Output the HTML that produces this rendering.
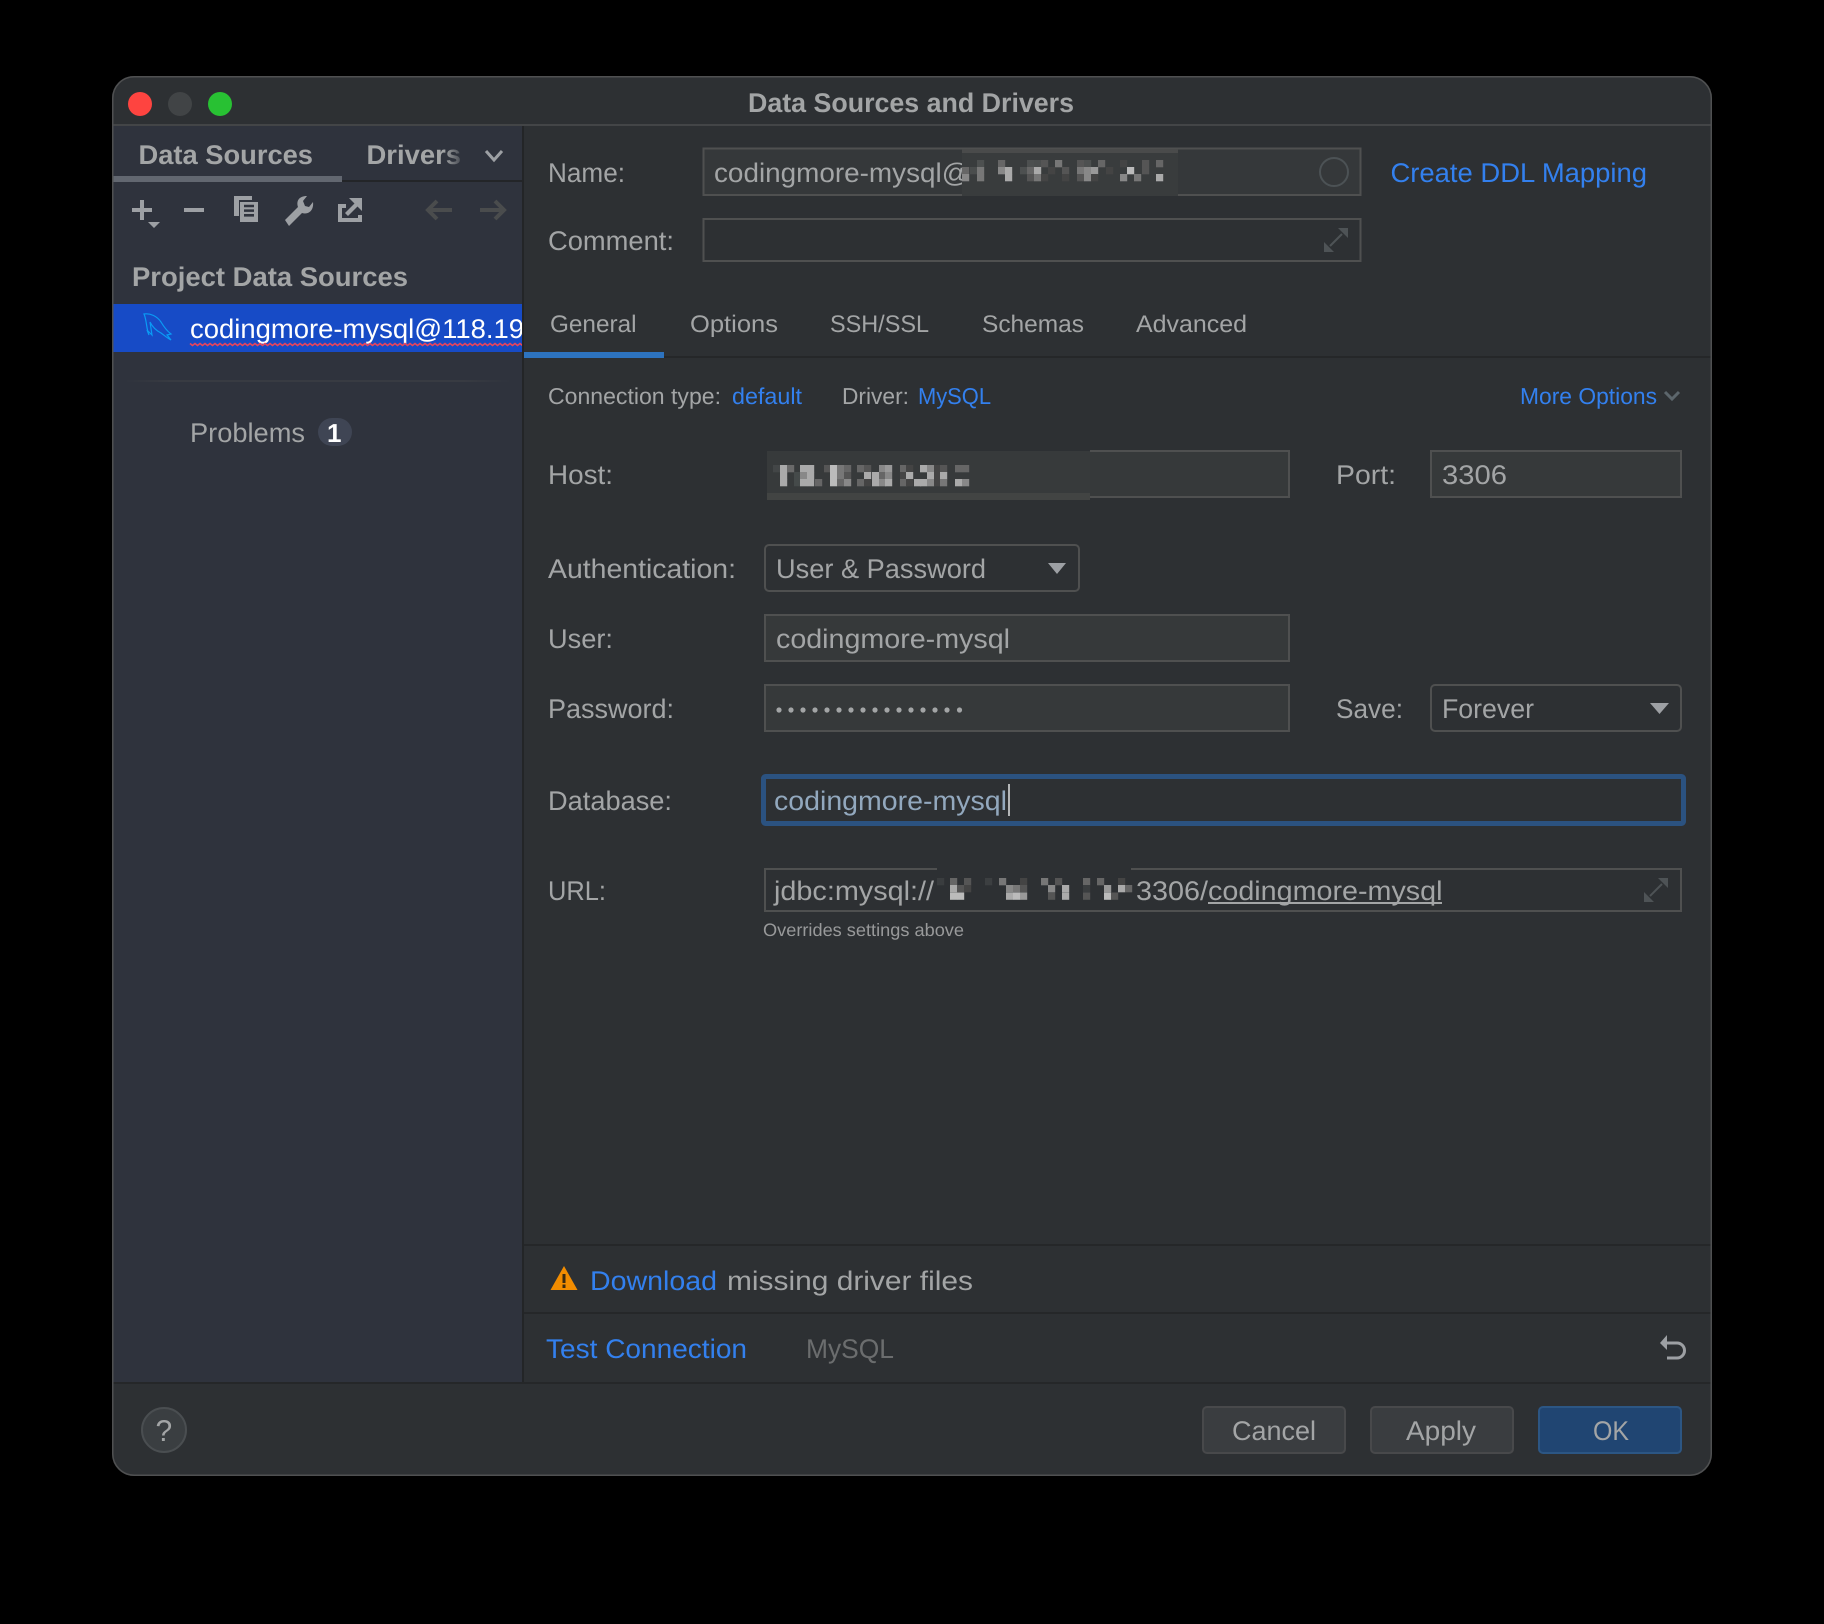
<!DOCTYPE html>
<html lang="en"><head><meta charset="utf-8"><title>Data Sources and Drivers</title>
<style>
html,body{margin:0;padding:0;background:#000;width:1824px;height:1624px;overflow:hidden}
svg{display:block}
text{font-family:"Liberation Sans",sans-serif;font-size:27px;fill:#a3a5a6;text-rendering:geometricPrecision}
.b{font-weight:700}.l{fill:#3380ee}.s{font-size:24px}.c{font-size:23px}
.p rect{width:7.2px;height:7.3px}
.i{fill:#9da0a4}.st{fill:none;stroke:#9da0a4;stroke-width:4}
</style></head><body>
<svg width="1824" height="1624" viewBox="0 0 1824 1624" xmlns="http://www.w3.org/2000/svg">
<defs>
<linearGradient id="fade" x1="0" x2="1" y1="0" y2="0"><stop offset="0" stop-color="#2f333d" stop-opacity="0"/><stop offset="1" stop-color="#2f333d" stop-opacity=".85"/></linearGradient>
<linearGradient id="sepg" x1="0" x2="1" y1="0" y2="0"><stop offset="0" stop-color="#383b42" stop-opacity="0"/><stop offset=".12" stop-color="#383b42"/><stop offset=".88" stop-color="#383b42"/><stop offset="1" stop-color="#383b42" stop-opacity="0"/></linearGradient>
<clipPath id="win"><rect x="112" y="76" width="1600" height="1400" rx="22"/></clipPath>
</defs>
<rect width="1824" height="1624" fill="#000"/>
<g clip-path="url(#win)">
<rect x="112" y="76" width="1600" height="1400" fill="#2d3033"/>
<rect x="112" y="126" width="411" height="1257" fill="#2f333d"/>
<rect x="112" y="124" width="1600" height="2" fill="#434547"/>
</g>
<circle cx="140" cy="104" r="12" fill="#fe4440"/><circle cx="180" cy="104" r="12" fill="#414446"/><circle cx="220" cy="104" r="12" fill="#28c133"/>
<text class="b" x="748" y="112" textLength="326" lengthAdjust="spacingAndGlyphs">Data Sources and Drivers</text>
<text class="b" x="138.500" y="164" textLength="174.500" lengthAdjust="spacingAndGlyphs">Data Sources</text>
<text class="b" x="366.500" y="164" textLength="94.500" lengthAdjust="spacingAndGlyphs">Drivers</text>
<rect x="444" y="140" width="19" height="30" fill="url(#fade)"/>
<path d="M486 151l8 9 8-9" fill="none" stroke="#9da0a4" stroke-width="3"/>
<rect x="342" y="180" width="180" height="2" fill="#232528"/>
<rect x="112" y="176" width="230" height="6" fill="#626770"/>
<path class="i" d="M140 200h4v8h8v4h-8v8h-4v-8h-8v-4h8zM148 222h12l-6 6zM184 208h20v4h-20z"/>
<path class="i" d="M234 196h18v4h-13v16h-5z"/>
<path class="i" fill-rule="evenodd" d="M240 202h18v20h-18zM244 204.800v2.500h10v-2.500zM244 209.400v2.500h10v-2.500zM244 214v2.600h10v-2.600z"/>
<path class="i" d="M285 220l13-13c-2-6 1-11 9-11l-4 5 2 5 4 1 4-5c1 8-4 13-11 11l-13 13z"/>
<path class="i" d="M338 204h8v4h-4v10h16v-3h4v7h-24z"/>
<path class="i" d="M349 198h13v13l-4.500-4.500-9.500 9.500-3-3 9.500-9.500z"/>
<path d="M452 210h-23M437 201l-9 9 9 9M480 210h23M495 201l9 9-9 9" fill="none" stroke="#4a4c4d" stroke-width="4"/>
<text class="b" x="132" y="286" textLength="276" lengthAdjust="spacingAndGlyphs">Project Data Sources</text>
<rect x="112" y="304" width="411" height="48" fill="#174bc6"/>
<path d="M144 314C150 313 157 316 161 322C164 327 167 331 171 334L167 335L171 340C167 338 164 335 161 333C155 330 152 326 150 322L152 335L147 330L149 335C146 328 147 321 144 314Z" fill="none" stroke="#0a9bf5" stroke-width="1.200"/>
<text x="190" y="338" textLength="334" lengthAdjust="spacingAndGlyphs" style="fill:#fff">codingmore-mysql@118.19</text>
<g fill="none" stroke="#e8445a" stroke-width="1.600">
<path id="w" d="M190 343.500l2.500 2 2.500-2 2.500 2 2.500-2 2.500 2 2.500-2 2.500 2 2.500-2 2.500 2 2.500-2 2.500 2 2.500-2 2.500 2 2.500-2 2.500 2 2.500-2 2.500 2 2.500-2 2.500 2 2.500-2 2.500 2 2.500-2 2.500 2 2.500-2 2.500 2 2.500-2 2.500 2 2.500-2 2.500 2 2.500-2 2.500 2 2.500-2 2.500 2 2.500-2 2.500 2 2.500-2 2.500 2 2.500-2 2.500 2 2.500-2 2.500 2 2.500-2 2.500 2 2.500-2 2.500 2 2.500-2 2.500 2 2.500-2 2.500 2 2.500-2 2.500 2 2.500-2 2.500 2 2.500-2 2.500 2 2.500-2 2.500 2 2.500-2 2.500 2 2.500-2 2.500 2 2.500-2 2.500 2 2.500-2 2.500 2 2.500-2 2.500 2 2.500-2 2.500 2 2.500-2"/>
<path transform="translate(165 0)" d="M190 343.500l2.500 2 2.500-2 2.500 2 2.500-2 2.500 2 2.500-2 2.500 2 2.500-2 2.500 2 2.500-2 2.500 2 2.500-2 2.500 2 2.500-2 2.500 2 2.500-2 2.500 2 2.500-2 2.500 2 2.500-2 2.500 2 2.500-2 2.500 2 2.500-2 2.500 2 2.500-2 2.500 2 2.500-2 2.500 2 2.500-2 2.500 2 2.500-2 2.500 2 2.500-2 2.500 2 2.500-2 2.500 2 2.500-2 2.500 2 2.500-2 2.500 2 2.500-2 2.500 2 2.500-2 2.500 2 2.500-2 2.500 2 2.500-2 2.500 2 2.500-2 2.500 2 2.500-2 2.500 2 2.500-2 2.500 2 2.500-2 2.500 2 2.500-2 2.500 2 2.500-2 2.500 2 2.500-2 2.500 2 2.500-2 2.500 2 2.500-2 2.500 2 2.500-2"/>
</g>
<rect x="125" y="380" width="385" height="2" fill="url(#sepg)"/>
<text x="190" y="442" textLength="115" lengthAdjust="spacingAndGlyphs">Problems</text>
<rect x="318" y="418" width="34" height="28" rx="14" fill="#3f4554"/>
<text class="b" x="327" y="442" style="fill:#fff;font-size:26px">1</text>
<rect x="523" y="126" width="1188" height="1257" fill="#2d3033"/>
<rect x="522" y="126" width="2" height="1257" fill="#232527"/>
<text x="548" y="182" textLength="77" lengthAdjust="spacingAndGlyphs">Name:</text>
<rect x="703.500" y="148.500" width="657" height="46.500" fill="#35383a" stroke="#4f5050" stroke-width="2"/>
<text x="714" y="182" textLength="256" lengthAdjust="spacingAndGlyphs">codingmore-mysql@</text>
<rect x="962" y="149" width="216" height="47" fill="#393c3d"/>
<rect x="962" y="149" width="216" height="4" fill="#4a4b4b"/>
<g class="p" transform="translate(0,160)"><rect x="977" fill="#4d5050"/><rect x="998" fill="#666"/><rect x="1027" fill="#4d5050"/><rect x="1034" fill="#4b4e4e"/><rect x="1041" fill="#555"/><rect x="1055" fill="#777"/><rect x="1077" fill="#555"/><rect x="1084" fill="#4d5050"/><rect x="1098" fill="#666"/><rect x="1120" fill="#444"/><rect x="1142" fill="#555"/><rect x="1156" fill="#666"/></g>
<g class="p" transform="translate(0,167)"><rect x="962" fill="#666"/><rect x="970" fill="#4a4d4d"/><rect x="977" fill="#777"/><rect x="998" fill="#888"/><rect x="1005" fill="#aaa"/><rect x="1020" fill="#4d5050"/><rect x="1027" fill="#666"/><rect x="1034" fill="#aaa"/><rect x="1048" fill="#444"/><rect x="1062" fill="#555"/><rect x="1077" fill="#777"/><rect x="1084" fill="#888"/><rect x="1091" fill="#999"/><rect x="1106" fill="#444"/><rect x="1127" fill="#bbb"/><rect x="1142" fill="#555"/></g>
<g class="p" transform="translate(0,174)"><rect x="962" fill="#888"/><rect x="977" fill="#777"/><rect x="1005" fill="#aaa"/><rect x="1027" fill="#555"/><rect x="1034" fill="#777"/><rect x="1041" fill="#444"/><rect x="1062" fill="#444"/><rect x="1077" fill="#555"/><rect x="1084" fill="#888"/><rect x="1091" fill="#444"/><rect x="1120" fill="#888"/><rect x="1134" fill="#777"/><rect x="1156" fill="#aaa"/></g>
<circle cx="1334" cy="172" r="14" fill="none" stroke="#4c5255" stroke-width="2"/>
<text class="l" x="1390.500" y="182" textLength="256.500" lengthAdjust="spacingAndGlyphs">Create DDL Mapping</text>
<text x="548" y="250" textLength="126" lengthAdjust="spacingAndGlyphs">Comment:</text>
<rect x="703.500" y="219" width="657" height="42" fill="#2d3033" stroke="#4f5050" stroke-width="2"/>
<path d="M1348 228v10l-10-10zM1324 252v-10l10 10z" fill="#4e5356"/><path d="M1330 246l12-12" stroke="#4e5356" stroke-width="2"/>
<text class="s" x="550" y="332" textLength="86.500" lengthAdjust="spacingAndGlyphs">General</text>
<text class="s" x="690" y="332" textLength="88" lengthAdjust="spacingAndGlyphs">Options</text>
<text class="s" x="830" y="332" textLength="99" lengthAdjust="spacingAndGlyphs">SSH/SSL</text>
<text class="s" x="982" y="332" textLength="102" lengthAdjust="spacingAndGlyphs">Schemas</text>
<text class="s" x="1136" y="332" textLength="111" lengthAdjust="spacingAndGlyphs">Advanced</text>
<rect x="524" y="356" width="1187" height="2" fill="#252729"/>
<rect x="524" y="352" width="140" height="6" fill="#2d73bf"/>
<text class="c" x="548" y="404" textLength="173" lengthAdjust="spacingAndGlyphs">Connection type:</text>
<text class="c l" x="732" y="404" textLength="70" lengthAdjust="spacingAndGlyphs">default</text>
<text class="c" x="842" y="404" textLength="67" lengthAdjust="spacingAndGlyphs">Driver:</text>
<text class="c l" x="918" y="404" textLength="73" lengthAdjust="spacingAndGlyphs">MySQL</text>
<text class="c l" x="1520" y="404" textLength="137" lengthAdjust="spacingAndGlyphs">More Options</text>
<path d="M1665 392l7 7 7-7" fill="none" stroke="#5c666c" stroke-width="3"/>
<text x="548" y="484" textLength="65" lengthAdjust="spacingAndGlyphs">Host:</text>
<rect x="765" y="451" width="524" height="46" fill="#36393a" stroke="#4f5050" stroke-width="2"/>
<rect x="764" y="449" width="326" height="53" fill="#2d3033"/>
<rect x="767" y="451" width="323" height="42" fill="#373a3b"/>
<rect x="767" y="493" width="323" height="7" fill="#424443"/>
<g class="p" transform="translate(0,465)"><rect x="773" fill="#434647"/><rect x="780" fill="#aaa"/><rect x="787" fill="#6a6a6a"/><rect x="800" fill="#aaa"/><rect x="807" fill="#aaa"/><rect x="824" fill="#555"/><rect x="830" fill="#bbb"/><rect x="837" fill="#777"/><rect x="844" fill="#666"/><rect x="857" fill="#666"/><rect x="864" fill="#555"/><rect x="879" fill="#888"/><rect x="885" fill="#999"/><rect x="900" fill="#666"/><rect x="906" fill="#444"/><rect x="920" fill="#aaa"/><rect x="927" fill="#888"/><rect x="934" fill="#444"/><rect x="940" fill="#555"/><rect x="955" fill="#666"/><rect x="962" fill="#666"/></g>
<g class="p" transform="translate(0,472)"><rect x="780" fill="#aaa"/><rect x="794" fill="#454a4a"/><rect x="800" fill="#888"/><rect x="807" fill="#aaa"/><rect x="830" fill="#bbb"/><rect x="837" fill="#777"/><rect x="844" fill="#555"/><rect x="864" fill="#aaa"/><rect x="872" fill="#aaa"/><rect x="879" fill="#666"/><rect x="885" fill="#888"/><rect x="900" fill="#444"/><rect x="906" fill="#aaa"/><rect x="927" fill="#aaa"/><rect x="934" fill="#444"/><rect x="940" fill="#aaa"/></g>
<g class="p" transform="translate(0,479)"><rect x="780" fill="#aaa"/><rect x="794" fill="#454a4a"/><rect x="800" fill="#aaa"/><rect x="807" fill="#aaa"/><rect x="815" fill="#666"/><rect x="830" fill="#bbb"/><rect x="837" fill="#666"/><rect x="844" fill="#888"/><rect x="857" fill="#666"/><rect x="864" fill="#444"/><rect x="872" fill="#aaa"/><rect x="879" fill="#888"/><rect x="885" fill="#aaa"/><rect x="900" fill="#666"/><rect x="906" fill="#444"/><rect x="914" fill="#aaa"/><rect x="920" fill="#aaa"/><rect x="927" fill="#888"/><rect x="934" fill="#444"/><rect x="940" fill="#777"/><rect x="955" fill="#aaa"/><rect x="962" fill="#888"/></g>
<text x="1336" y="484" textLength="60" lengthAdjust="spacingAndGlyphs">Port:</text>
<rect x="1431" y="451" width="250" height="46" fill="#36393a" stroke="#4f5050" stroke-width="2"/>
<text x="1442" y="484" textLength="65" lengthAdjust="spacingAndGlyphs">3306</text>
<text x="548" y="578" textLength="188" lengthAdjust="spacingAndGlyphs">Authentication:</text>
<rect x="765" y="545" width="314" height="46" rx="4" fill="#2d3033" stroke="#4f5050" stroke-width="2"/>
<text x="776" y="578" textLength="210" lengthAdjust="spacingAndGlyphs">User &amp; Password</text>
<path d="M1048 563h18l-9 11z" class="i"/>
<text x="548" y="648" textLength="65" lengthAdjust="spacingAndGlyphs">User:</text>
<rect x="765" y="615" width="524" height="46" fill="#36393a" stroke="#4f5050" stroke-width="2"/>
<text x="776" y="648" textLength="234" lengthAdjust="spacingAndGlyphs">codingmore-mysql</text>
<text x="548" y="718" textLength="126" lengthAdjust="spacingAndGlyphs">Password:</text>
<rect x="765" y="685" width="524" height="46" fill="#36393a" stroke="#4f5050" stroke-width="2"/>
<g fill="#a3a5a6"><circle cx="779" cy="710" r="2.600"/><circle cx="791" cy="710" r="2.600"/><circle cx="803" cy="710" r="2.600"/><circle cx="815" cy="710" r="2.600"/><circle cx="827" cy="710" r="2.600"/><circle cx="839" cy="710" r="2.600"/><circle cx="851" cy="710" r="2.600"/><circle cx="863" cy="710" r="2.600"/><circle cx="875" cy="710" r="2.600"/><circle cx="887" cy="710" r="2.600"/><circle cx="899" cy="710" r="2.600"/><circle cx="911" cy="710" r="2.600"/><circle cx="923" cy="710" r="2.600"/><circle cx="935" cy="710" r="2.600"/><circle cx="947" cy="710" r="2.600"/><circle cx="959.500" cy="710" r="2.600"/></g>
<text x="1336" y="718" textLength="67" lengthAdjust="spacingAndGlyphs">Save:</text>
<rect x="1431" y="685" width="250" height="46" rx="4" fill="#2d3033" stroke="#4f5050" stroke-width="2"/>
<text x="1442" y="718" textLength="92" lengthAdjust="spacingAndGlyphs">Forever</text>
<path d="M1650 703h19l-9.500 11z" class="i"/>
<text x="548" y="810" textLength="124" lengthAdjust="spacingAndGlyphs">Database:</text>
<rect x="763.500" y="776.500" width="920" height="47" rx="2" fill="#2d3033" stroke="#2b5280" stroke-width="5"/>
<text x="774" y="810" textLength="233" lengthAdjust="spacingAndGlyphs" style="fill:#92a8be">codingmore-mysql</text>
<rect x="1008" y="784" width="2" height="32" fill="#b4b6b8"/>
<text x="548" y="900" textLength="58" lengthAdjust="spacingAndGlyphs">URL:</text>
<rect x="765" y="869" width="916" height="42" fill="#2d3033" stroke="#4f5050" stroke-width="2"/>
<text x="774" y="900" textLength="160" lengthAdjust="spacingAndGlyphs">jdbc:mysql://</text>
<rect x="937" y="866" width="194" height="44" fill="#2d3033"/>
<g class="p" transform="translate(0,878)"><rect x="937" fill="#3a3d3f"/><rect x="950" fill="#666"/><rect x="964" fill="#555"/><rect x="985" fill="#3c3f41"/><rect x="999" fill="#777"/><rect x="1020" fill="#444"/><rect x="1041" fill="#777"/><rect x="1055" fill="#555"/><rect x="1083" fill="#666"/><rect x="1097" fill="#666"/><rect x="1118" fill="#444"/></g>
<g class="p" transform="translate(0,885)"><rect x="950" fill="#aaa"/><rect x="957" fill="#555"/><rect x="964" fill="#444"/><rect x="1006" fill="#888"/><rect x="1013" fill="#777"/><rect x="1020" fill="#555"/><rect x="1048" fill="#888"/><rect x="1062" fill="#aaa"/><rect x="1083" fill="#3a3d3f"/><rect x="1104" fill="#999"/><rect x="1118" fill="#aaa"/><rect x="1125" fill="#666"/></g>
<g class="p" transform="translate(0,892.500)"><rect x="950" fill="#bbb"/><rect x="957" fill="#bbb"/><rect x="1006" fill="#aaa"/><rect x="1013" fill="#bbb"/><rect x="1020" fill="#999"/><rect x="1048" fill="#555"/><rect x="1062" fill="#aaa"/><rect x="1083" fill="#555"/><rect x="1104" fill="#bbb"/><rect x="1111" fill="#555"/></g>
<text x="1136" y="900" textLength="72" lengthAdjust="spacingAndGlyphs">3306/</text>
<text x="1208" y="900" textLength="234.500" lengthAdjust="spacingAndGlyphs">codingmore-mysql</text>
<rect x="1208" y="902" width="234" height="2" fill="#a3a5a6"/>
<path d="M1668 878v10l-10-10zM1644 902v-10l10 10z" fill="#4e5356"/><path d="M1650 896l12-12" stroke="#4e5356" stroke-width="2"/>
<text x="763" y="936" textLength="201" lengthAdjust="spacingAndGlyphs" style="font-size:18px;fill:#98999a">Overrides settings above</text>
<rect x="524" y="1244" width="1187" height="2" fill="#252729"/>
<rect x="524" y="1312" width="1187" height="2" fill="#252729"/>
<rect x="112" y="1382" width="1599" height="2" fill="#252729"/>
<path d="M564 1266l13.500 24h-27z" fill="#f28c00"/><rect x="562.500" y="1274" width="3" height="9" fill="#3b2a10"/><rect x="562.500" y="1284.500" width="3" height="3.500" fill="#3b2a10"/>
<text class="l" x="590" y="1290" textLength="127" lengthAdjust="spacingAndGlyphs">Download</text>
<text x="727" y="1290" textLength="246" lengthAdjust="spacingAndGlyphs">missing driver files</text>
<text class="l" x="546" y="1358" textLength="201" lengthAdjust="spacingAndGlyphs">Test Connection</text>
<text x="806" y="1358" textLength="88" lengthAdjust="spacingAndGlyphs" style="fill:#6b6d6e">MySQL</text>
<path d="M1666 1343h11a7.500 7.500 0 0 1 0 15h-10" fill="none" stroke="#9da0a4" stroke-width="3"/><path d="M1660 1343l7-8v15z" class="i"/>
<circle cx="164" cy="1430" r="22" fill="#3a3e41" stroke="#4a4e51" stroke-width="2"/>
<text x="155.500" y="1441" style="font-size:30px">?</text>
<rect x="1203" y="1407" width="142" height="46" rx="4" fill="#3a3d40" stroke="#48494b" stroke-width="2"/>
<text x="1232" y="1440" textLength="84" lengthAdjust="spacingAndGlyphs">Cancel</text>
<rect x="1371" y="1407" width="142" height="46" rx="4" fill="#3a3d40" stroke="#48494b" stroke-width="2"/>
<text x="1406" y="1440" textLength="70" lengthAdjust="spacingAndGlyphs">Apply</text>
<rect x="1539" y="1407" width="142" height="46" rx="4" fill="#204572" stroke="#2c5684" stroke-width="2"/>
<text x="1593" y="1440" textLength="36" lengthAdjust="spacingAndGlyphs">OK</text>
<rect x="112.750" y="76.750" width="1598.500" height="1398.500" rx="21.500" fill="none" stroke="#4f5051" stroke-width="1.500"/>
</svg>
</body></html>
